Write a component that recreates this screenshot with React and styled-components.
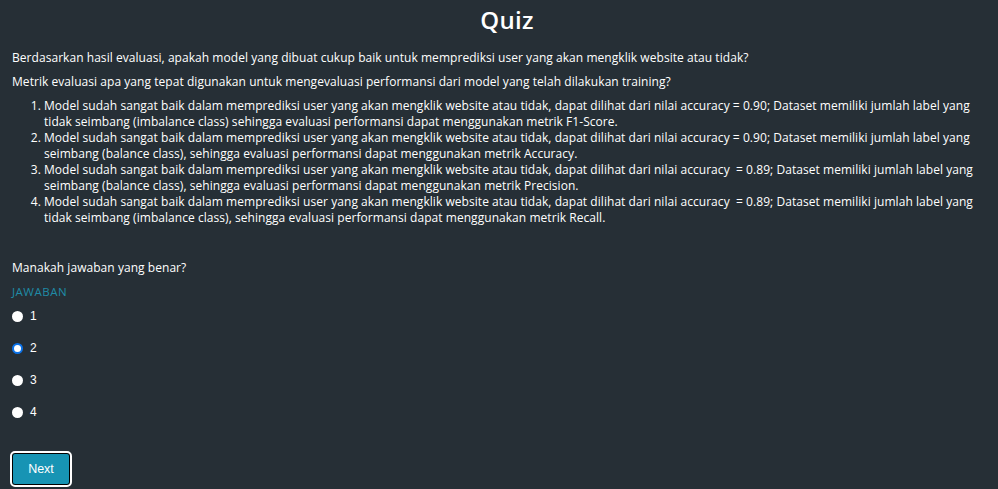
import React from "react";
import styled, { createGlobalStyle } from "styled-components";

const Global = createGlobalStyle`
  html, body { margin: 0; padding: 0; background: #262f36; }
  body { font-family: "Open Sans", "Noto Sans", sans-serif; color: #fff; }
`;

const Page = styled.div`
  box-sizing: border-box;
  width: 998px;
  min-height: 489px;
  padding: 4px 12px 0 12px;
  background: #262f36;
`;

const Title = styled.h1`
  margin: 0 0 14px 16px;
  text-align: center;
  font-size: 24px;
  font-weight: 600;
  line-height: 32px;
  letter-spacing: 0.3px;
`;

const Para = styled.p`
  margin: 0 0 8px 0;
  font-size: 12px;
  line-height: 16px;
  letter-spacing: 0.05px;
`;

const List = styled.ol`
  margin: 0 0 34px 0;
  padding-left: 32px;
  font-size: 12px;
  line-height: 16px;
  letter-spacing: 0.05px;
`;

const Question = styled.p`
  margin: 0 0 8px 0;
  font-size: 12px;
  line-height: 16px;
  letter-spacing: 0.05px;
`;

const Label = styled.div`
  color: #1f8ba6;
  font-size: 11.5px;
  line-height: 16px;
  letter-spacing: 0.5px;
  margin-bottom: 8px;
`;

const Options = styled.div`
  display: flex;
  flex-direction: column;
  gap: 16px;
`;

const Option = styled.label`
  display: flex;
  align-items: center;
  gap: 7px;
  height: 16px;
  font-family: "Liberation Sans", Arial, sans-serif;
  font-size: 12px;
`;

const Radio = styled.span`
  box-sizing: border-box;
  width: 11px;
  height: 11px;
  border-radius: 50%;
  background: #fff;
  border: ${(p) => (p.$checked ? "2px solid #0b72e8" : "none")};
`;

const Button = styled.button`
  margin-top: 32px;
  margin-left: -1px;
  width: 60px;
  height: 34px;
  box-sizing: border-box;
  background: #1794b4;
  color: #fff;
  border: 1px solid #000;
  outline: 2px solid #fff;
  outline-offset: -1px;
  border-radius: 4px;
  box-shadow: inset 0 0 0 1px #000;
  font-family: "Liberation Sans", Arial, sans-serif;
  font-size: 12.5px;
`;

const items = [
  "Model sudah sangat baik dalam memprediksi user yang akan mengklik website atau tidak, dapat dilihat dari nilai accuracy = 0.90; Dataset memiliki jumlah label yang tidak seimbang (imbalance class) sehingga evaluasi performansi dapat menggunakan metrik F1-Score.",
  "Model sudah sangat baik dalam memprediksi user yang akan mengklik website atau tidak, dapat dilihat dari nilai accuracy = 0.90; Dataset memiliki jumlah label yang seimbang (balance class), sehingga evaluasi performansi dapat menggunakan metrik Accuracy.",
  "Model sudah sangat baik dalam memprediksi user yang akan mengklik website atau tidak, dapat dilihat dari nilai accuracy \u00a0= 0.89; Dataset memiliki jumlah label yang seimbang (balance class), sehingga evaluasi performansi dapat menggunakan metrik Precision.",
  "Model sudah sangat baik dalam memprediksi user yang akan mengklik website atau tidak, dapat dilihat dari nilai accuracy \u00a0= 0.89; Dataset memiliki jumlah label yang tidak seimbang (imbalance class), sehingga evaluasi performansi dapat menggunakan metrik Recall.",
];

export default function App() {
  return (
    <>
      <Global />
      <Page>
        <Title>Quiz</Title>
        <Para>Berdasarkan hasil evaluasi, apakah model yang dibuat cukup baik untuk memprediksi user yang akan mengklik website atau tidak?</Para>
        <Para>Metrik evaluasi apa yang tepat digunakan untuk mengevaluasi performansi dari model yang telah dilakukan training?</Para>
        <List>
          {items.map((t, i) => (
            <li key={i}>{t}</li>
          ))}
        </List>
        <Question>Manakah jawaban yang benar?</Question>
        <Label>JAWABAN</Label>
        <Options>
          {["1", "2", "3", "4"].map((v) => (
            <Option key={v}>
              <Radio $checked={v === "2"} />
              {v}
            </Option>
          ))}
        </Options>
        <Button>Next</Button>
      </Page>
    </>
  );
}
